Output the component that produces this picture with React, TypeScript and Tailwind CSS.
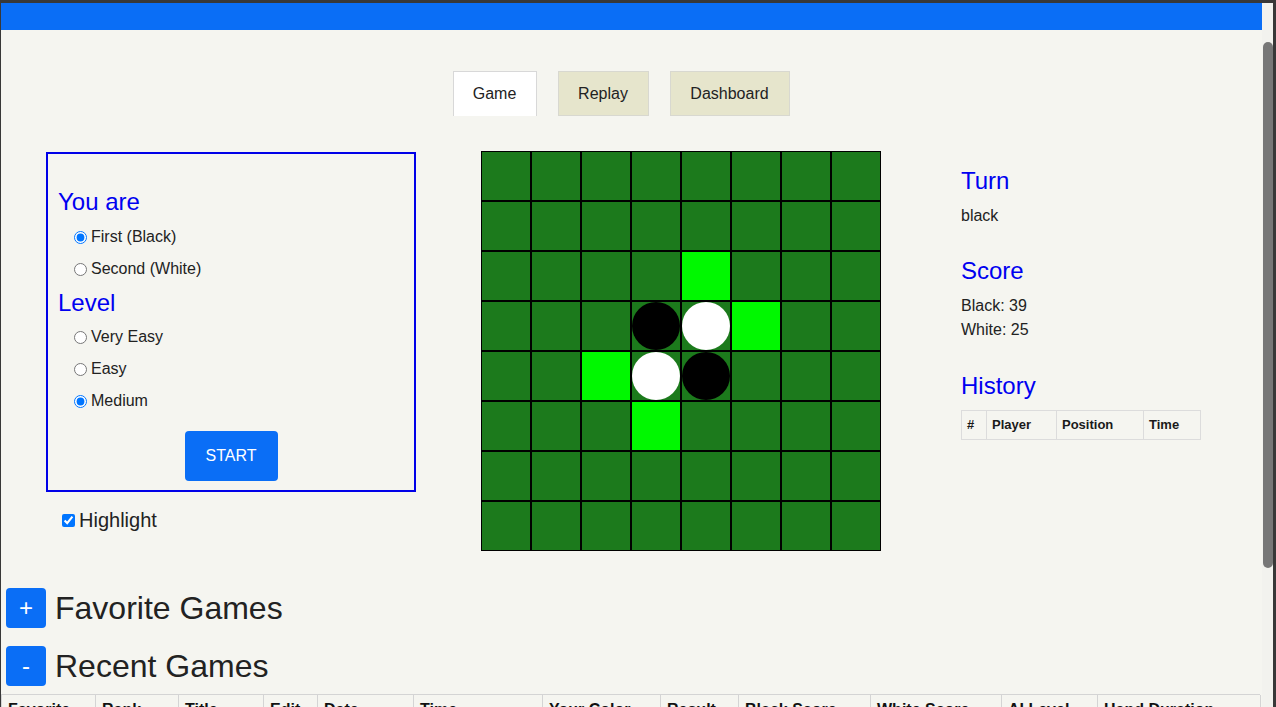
import React from "react";

const HL: Record<string, boolean> = { "2-4": true, "3-5": true, "4-2": true, "5-3": true };
const PIECES: Record<string, "b" | "w"> = { "3-3": "b", "3-4": "w", "4-3": "w", "4-4": "b" };

function Board() {
  const cells = [];
  for (let r = 0; r < 8; r++) {
    for (let c = 0; c < 8; c++) {
      const k = `${r}-${c}`;
      const p = PIECES[k];
      cells.push(
        <div
          key={k}
          className={`w-[50px] h-[50px] border border-black flex items-center justify-center ${HL[k] ? "bg-[#00f800]" : "bg-[#1c7a1c]"}`}
        >
          {p === "b" && <div className="w-[48px] h-[48px] rounded-full bg-black" />}
          {p === "w" && <div className="w-[48px] h-[48px] rounded-full bg-white" />}
        </div>
      );
    }
  }
  return <div className="grid grid-cols-[repeat(8,50px)] w-[400px] h-[400px] shrink-0">{cells}</div>;
}

function Radio({ label, checked }: { label: string; checked?: boolean }) {
  return (
    <label className="h-[32px] flex items-center pl-[26px] text-[16px] text-[#222]">
      <input type="radio" defaultChecked={checked} className="m-0 w-[13px] h-[13px] accent-[#0075ff]" />
      <span className="ml-[4px]">{label}</span>
    </label>
  );
}

const BOTTOM_COLS: [string, number][] = [
  ["Favorite", 94],
  ["Rank", 83],
  ["Title", 85],
  ["Edit", 54],
  ["Date", 96],
  ["Time", 129],
  ["Your Color", 118],
  ["Result", 78],
  ["Black Score", 132],
  ["White Score", 131],
  ["AI Level", 96],
  ["Hand Duration", 163],
];

export default function App() {
  return (
    <div className="w-[1276px] h-[707px] overflow-hidden bg-[#383838] pt-[3px] pl-[1px] pr-[3px] flex font-['Liberation_Sans',Arial,sans-serif]">
      <div className="w-[1261px] h-[704px] overflow-hidden bg-[#f5f5f0] shrink-0">
        <div className="h-[27px] bg-[#0a6ef6]" />

        <div className="mt-[41px] flex justify-center pr-[21px] gap-[21px] text-[16px] text-[#222]">
          <div className="w-[84px] h-[45px] bg-white border-x border-t border-[#d8d8d8] flex items-center justify-center">Game</div>
          <div className="w-[91px] h-[45px] bg-[#e6e5cc] border border-[#d8d8d0] flex items-center justify-center">Replay</div>
          <div className="w-[120px] h-[45px] bg-[#e6e5cc] border border-[#d8d8d0] flex items-center justify-center">Dashboard</div>
        </div>

        <div className="mt-[35px] flex items-start">
          <div className="ml-[45px] w-[370px] shrink-0">
            <div className="mt-[1px] h-[340px] border-2 border-[#0000e8] pt-[33px]">
              <div className="h-[30px] leading-[30px] pl-[10px] text-[24px] text-[#0000f0]">You are</div>
              <div className="mt-[4px]">
                <Radio label="First (Black)" checked />
                <Radio label="Second (White)" />
              </div>
              <div className="mt-[3px] h-[30px] leading-[30px] pl-[10px] text-[24px] text-[#0000f0]">Level</div>
              <div className="mt-[3px]">
                <Radio label="Very Easy" />
                <Radio label="Easy" />
                <Radio label="Medium" checked />
              </div>
              <div className="mt-[14px] flex justify-center">
                <button className="w-[93px] h-[50px] rounded-[4px] bg-[#0a6ef6] text-white text-[16px]">START</button>
              </div>
            </div>
            <label className="mt-[16px] h-[24px] flex items-center pl-[16px] text-[20px] text-[#222]">
              <input type="checkbox" defaultChecked className="m-0 w-[13px] h-[13px] accent-[#0075ff]" />
              <span className="ml-[4px]">Highlight</span>
            </label>
          </div>

          <div className="ml-[65px]">
            <Board />
          </div>

          <div className="ml-[80px] w-[260px] text-[#222]">
            <div className="mt-[15px] h-[30px] leading-[30px] text-[24px] text-[#0000f0]">Turn</div>
            <div className="mt-[8px] h-[24px] leading-[24px] text-[16px]">black</div>
            <div className="mt-[28px] h-[30px] leading-[30px] text-[24px] text-[#0000f0]">Score</div>
            <div className="mt-[8px] h-[24px] leading-[24px] text-[16px]">Black: 39</div>
            <div className="h-[24px] leading-[24px] text-[16px]">White: 25</div>
            <div className="mt-[29px] h-[30px] leading-[30px] text-[24px] text-[#0000f0]">History</div>
            <div className="mt-[9px] w-[240px] h-[30px] border border-[#dcdcdc] flex text-[13px] font-bold text-[#1a1a1a]">
              <div className="w-[25px] border-r border-[#dcdcdc] pl-[5px] flex items-center">#</div>
              <div className="w-[70px] border-r border-[#dcdcdc] pl-[5px] flex items-center">Player</div>
              <div className="w-[87px] border-r border-[#dcdcdc] pl-[5px] flex items-center">Position</div>
              <div className="flex-1 pl-[5px] flex items-center">Time</div>
            </div>
          </div>
        </div>

        <div className="mt-[37px] pl-[5px]">
          <div className="h-[40px] flex items-center">
            <div className="w-[40px] h-[40px] rounded-[4px] bg-[#0a6ef6] text-white text-[24px] flex items-center justify-center">+</div>
            <div className="ml-[9px] text-[32px] text-[#222] leading-[40px]">Favorite Games</div>
          </div>
          <div className="mt-[18px] h-[40px] flex items-center">
            <div className="w-[40px] h-[40px] rounded-[4px] bg-[#0a6ef6] text-white text-[24px] flex items-center justify-center">-</div>
            <div className="ml-[9px] text-[32px] text-[#222] leading-[40px]">Recent Games</div>
          </div>
        </div>

        <div className="mt-[8px] flex border-t border-l border-[#d4d4d4] w-[1259px]">
          {BOTTOM_COLS.map(([name, w]) => (
            <div
              key={name}
              style={{ width: w }}
              className="shrink-0 border-r border-[#d4d4d4] pl-[6px] pt-[3px] h-[40px] text-[16px] leading-[24px] font-bold text-[#111] whitespace-nowrap"
            >
              {name}
            </div>
          ))}
        </div>
      </div>

      <div className="w-[11px] h-[704px] bg-[#f2f2ee] shrink-0 flex justify-center">
        <div className="mt-[39px] w-[10px] h-[526px] rounded-full bg-[#777777]" />
      </div>
    </div>
  );
}
